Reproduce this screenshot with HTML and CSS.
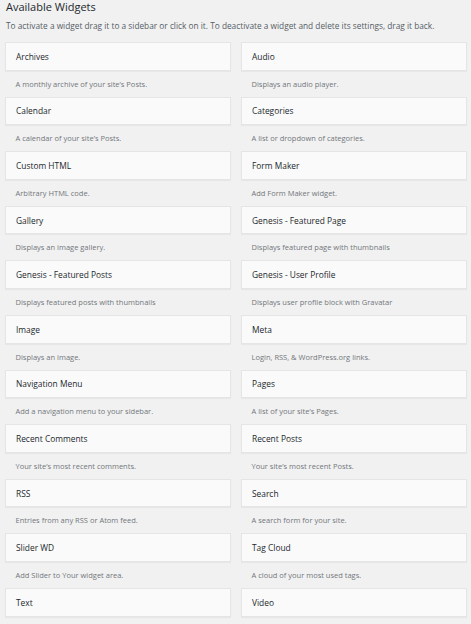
FILE: index.html
```html
<!DOCTYPE html>
<html lang="en">
<head>
    <meta charset="UTF-8">
    <meta name="viewport" content="width=device-width, initial-scale=1.0">
    <title>Available Widgets</title>
    <link rel="stylesheet" href="styles.css">
</head>
<body>
    <div class="widgets">
        <h2>Available Widgets</h2>
        <p class="intro">To activate a widget drag it to a sidebar or click on it. To deactivate a widget and delete its settings, drag it back.</p>

        <div class="widget-list">
            <div class="widget">
                <div class="widget-top">Archives</div>
                <div class="widget-desc">A monthly archive of your site’s Posts.</div>
            </div>
            <div class="widget">
                <div class="widget-top">Audio</div>
                <div class="widget-desc">Displays an audio player.</div>
            </div>
            <div class="widget">
                <div class="widget-top">Calendar</div>
                <div class="widget-desc">A calendar of your site’s Posts.</div>
            </div>
            <div class="widget">
                <div class="widget-top">Categories</div>
                <div class="widget-desc">A list or dropdown of categories.</div>
            </div>
            <div class="widget">
                <div class="widget-top">Custom HTML</div>
                <div class="widget-desc">Arbitrary HTML code.</div>
            </div>
            <div class="widget">
                <div class="widget-top">Form Maker</div>
                <div class="widget-desc">Add Form Maker widget.</div>
            </div>
            <div class="widget">
                <div class="widget-top">Gallery</div>
                <div class="widget-desc">Displays an image gallery.</div>
            </div>
            <div class="widget">
                <div class="widget-top">Genesis - Featured Page</div>
                <div class="widget-desc">Displays featured page with thumbnails</div>
            </div>
            <div class="widget">
                <div class="widget-top">Genesis - Featured Posts</div>
                <div class="widget-desc">Displays featured posts with thumbnails</div>
            </div>
            <div class="widget">
                <div class="widget-top">Genesis - User Profile</div>
                <div class="widget-desc">Displays user profile block with Gravatar</div>
            </div>
            <div class="widget">
                <div class="widget-top">Image</div>
                <div class="widget-desc">Displays an image.</div>
            </div>
            <div class="widget">
                <div class="widget-top">Meta</div>
                <div class="widget-desc">Login, RSS, &amp; WordPress.org links.</div>
            </div>
            <div class="widget">
                <div class="widget-top">Navigation Menu</div>
                <div class="widget-desc">Add a navigation menu to your sidebar.</div>
            </div>
            <div class="widget">
                <div class="widget-top">Pages</div>
                <div class="widget-desc">A list of your site’s Pages.</div>
            </div>
            <div class="widget">
                <div class="widget-top">Recent Comments</div>
                <div class="widget-desc">Your site’s most recent comments.</div>
            </div>
            <div class="widget">
                <div class="widget-top">Recent Posts</div>
                <div class="widget-desc">Your site’s most recent Posts.</div>
            </div>
            <div class="widget">
                <div class="widget-top">RSS</div>
                <div class="widget-desc">Entries from any RSS or Atom feed.</div>
            </div>
            <div class="widget">
                <div class="widget-top">Search</div>
                <div class="widget-desc">A search form for your site.</div>
            </div>
            <div class="widget">
                <div class="widget-top">Slider WD</div>
                <div class="widget-desc">Add Slider to Your widget area.</div>
            </div>
            <div class="widget">
                <div class="widget-top">Tag Cloud</div>
                <div class="widget-desc">A cloud of your most used tags.</div>
            </div>
            <div class="widget">
                <div class="widget-top">Text</div>
            </div>
            <div class="widget">
                <div class="widget-top">Video</div>
            </div>
        </div>
    </div>
</body>
</html>
```

FILE: styles.css
```css
* {
    margin: 0;
    padding: 0;
    box-sizing: border-box;
}

body {
    background: #f1f1f1;
    font-family: 'Open Sans', sans-serif;
    color: #23282d;
}

.widgets {
    padding: 0 4px 0 5px;
}

h2 {
    font-size: 11px;
    line-height: 14px;
    font-weight: 400;
    color: #23282d;
    padding-left: 1px;
}

.intro {
    font-size: 8.3px;
    line-height: 10px;
    color: #555d66;
    margin: 6.5px 0 11.5px;
    padding-left: 1px;
}

.widget-list {
    display: grid;
    grid-template-columns: 226px 226px;
    grid-auto-rows: 54.6px;
    column-gap: 10px;
}

.widget-top {
    height: 28.6px;
    display: flex;
    align-items: center;
    padding-left: 10px;
    background: #fafafa;
    border: 1px solid #e5e5e5;
    box-shadow: 0 1px 1px rgba(0, 0, 0, 0.04);
    font-size: 8.4px;
    color: #23282d;
}

.widget-desc {
    padding: 0 10.5px;
    font-size: 7.5px;
    line-height: 26px;
    color: #72777c;
    white-space: nowrap;
    overflow: hidden;
}
```
